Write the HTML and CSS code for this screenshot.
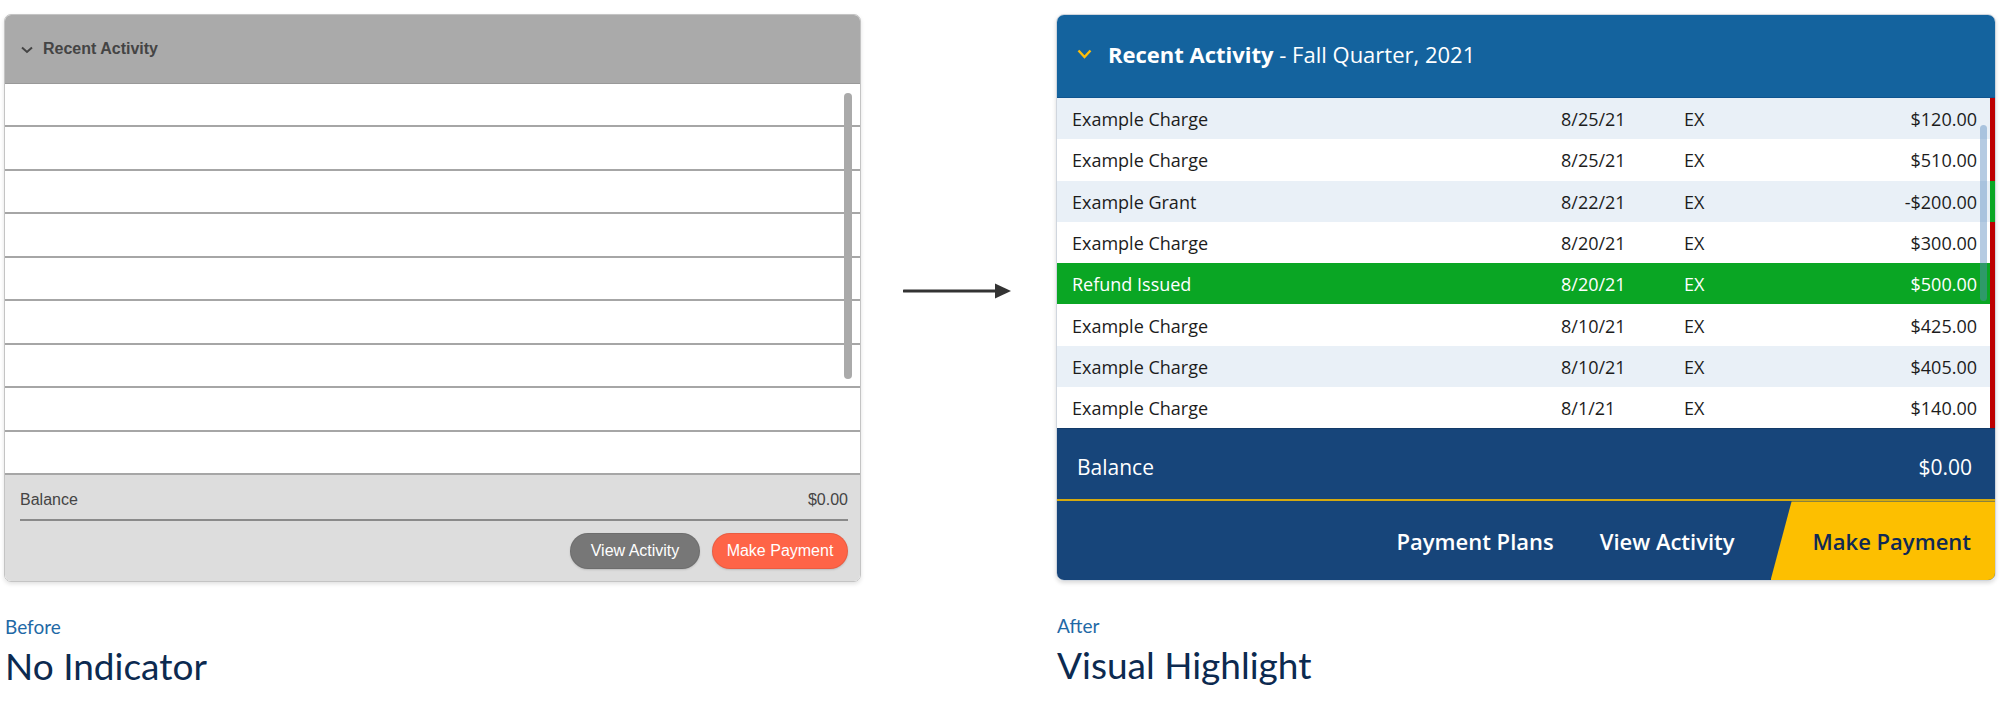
FILE: index.html
```html
<!DOCTYPE html>
<html lang="en">
<head>
  <meta charset="UTF-8" />
  <title>Recent Activity - Before / After</title>
  <link rel="stylesheet" href="styles.css">
</head>
<body>
  <div class="compare">

    <!-- Before -->
    <section class="column column-before">
      <div class="old-card">
        <div class="old-header">
          <svg class="old-chevron" width="12" height="8" viewBox="0 0 12 8"><path d="M1 1.5 L6 6 L11 1.5" fill="none" stroke="#444" stroke-width="2"/></svg>
          <span>Recent Activity</span>
        </div>
        <div class="old-rows">
          <div class="old-row"></div>
          <div class="old-row"></div>
          <div class="old-row"></div>
          <div class="old-row"></div>
          <div class="old-row"></div>
          <div class="old-row"></div>
          <div class="old-row"></div>
          <div class="old-row"></div>
          <div class="old-row"></div>
          <div class="old-scroll"></div>
        </div>
        <div class="old-footer">
          <div class="old-balance">
            <span>Balance</span>
            <span>$0.00</span>
          </div>
          <div class="old-actions">
            <button class="old-btn old-btn-grey">View Activity</button>
            <button class="old-btn old-btn-red">Make Payment</button>
          </div>
        </div>
      </div>
      <div class="caption">
        <p class="caption-kicker">Before</p>
        <h2 class="caption-title">No Indicator</h2>
      </div>
    </section>

    <div class="arrow">
      <svg width="110" height="18" viewBox="0 0 110 18"><path d="M1 9 H92" stroke="#333" stroke-width="3" stroke-linecap="round"/><path d="M92 1.5 L108 9 L92 16.5 Z" fill="#333"/></svg>
    </div>

    <!-- After -->
    <section class="column column-after">
      <div class="new-card">
        <div class="new-header">
          <svg class="new-chevron" width="15" height="10" viewBox="0 0 15 10"><path d="M1.5 1.5 L7.5 8 L13.5 1.5" fill="none" stroke="#fbbd0a" stroke-width="2.4"/></svg>
          <span class="new-title"><b>Recent Activity</b> - Fall Quarter, 2021</span>
        </div>
        <div class="new-rows">
          <div class="new-row shade"><span class="c-desc">Example Charge</span><span class="c-date">8/25/21</span><span class="c-code">EX</span><span class="c-amt">$120.00</span></div>
          <div class="new-row"><span class="c-desc">Example Charge</span><span class="c-date">8/25/21</span><span class="c-code">EX</span><span class="c-amt">$510.00</span></div>
          <div class="new-row shade credit"><span class="c-desc">Example Grant</span><span class="c-date">8/22/21</span><span class="c-code">EX</span><span class="c-amt">-$200.00</span></div>
          <div class="new-row"><span class="c-desc">Example Charge</span><span class="c-date">8/20/21</span><span class="c-code">EX</span><span class="c-amt">$300.00</span></div>
          <div class="new-row refund"><span class="c-desc">Refund Issued</span><span class="c-date">8/20/21</span><span class="c-code">EX</span><span class="c-amt">$500.00</span></div>
          <div class="new-row"><span class="c-desc">Example Charge</span><span class="c-date">8/10/21</span><span class="c-code">EX</span><span class="c-amt">$425.00</span></div>
          <div class="new-row shade"><span class="c-desc">Example Charge</span><span class="c-date">8/10/21</span><span class="c-code">EX</span><span class="c-amt">$405.00</span></div>
          <div class="new-row"><span class="c-desc">Example Charge</span><span class="c-date">8/1/21</span><span class="c-code">EX</span><span class="c-amt">$140.00</span></div>
          <div class="new-scroll"></div>
        </div>
        <div class="new-balance">
          <span>Balance</span>
          <span>$0.00</span>
        </div>
        <div class="new-actions">
          <a class="new-link link-plans">Payment Plans</a>
          <a class="new-link">View Activity</a>
          <a class="new-pay">Make Payment</a>
        </div>
      </div>
      <div class="caption">
        <p class="caption-kicker">After</p>
        <h2 class="caption-title">Visual Highlight</h2>
      </div>
    </section>

  </div>
</body>
</html>
```

FILE: styles.css
```css
body {
  margin: 0;
  background: #fff;
  font-family: 'Liberation Sans', Arial, sans-serif;
}

.compare {
  display: flex;
  align-items: flex-start;
  padding: 14px 0 0 4px;
}

.column-before {
  width: 857px;
}

.column-after {
  width: 940px;
}

.arrow {
  width: 195px;
  padding-top: 268px;
  padding-left: 42px;
  box-sizing: border-box;
}

.arrow svg {
  display: block;
}

/* ---------- before card ---------- */

.old-card {
  border: 1px solid #c4c4c4;
  border-radius: 7px;
  overflow: hidden;
  box-shadow: 0 2px 4px rgba(0, 0, 0, 0.12);
}

.old-header {
  height: 68px;
  background: #aaaaaa;
  display: flex;
  align-items: center;
  gap: 10px;
  padding-left: 16px;
  color: #444;
  font-weight: bold;
  font-size: 16px;
  border-bottom: 1px solid #999;
}

.old-chevron {
  margin-top: 1px;
}

.old-rows {
  position: relative;
  height: 389px;
  display: flex;
  flex-direction: column;
  background: #fff;
}

.old-row {
  flex: 1;
}

.old-row + .old-row {
  border-top: 2px solid #a6a6a6;
}

.old-scroll {
  position: absolute;
  top: 9px;
  right: 8px;
  width: 8px;
  height: 286px;
  border-radius: 4px;
  background: #aaa;
}

.old-footer {
  background: #dddddd;
  border-top: 2px solid #a6a6a6;
  padding: 0 12px 12px 15px;
}

.old-balance {
  display: flex;
  justify-content: space-between;
  align-items: center;
  height: 46px;
  padding-top: 5px;
  box-sizing: border-box;
  font-size: 16px;
  color: #444;
  border-bottom: 2px solid #8a8a8a;
}

.old-actions {
  display: flex;
  justify-content: flex-end;
  gap: 12px;
  margin-top: 12px;
}

.old-btn {
  height: 36px;
  border-radius: 18px;
  border: 1px solid rgba(0, 0, 0, 0.08);
  color: #fff;
  font-family: 'Liberation Sans', Arial, sans-serif;
  font-size: 16px;
  box-shadow: 0 1px 2px rgba(0, 0, 0, 0.15);
}

.old-btn-grey {
  width: 130px;
  background: #777777;
}

.old-btn-red {
  width: 136px;
  background: #fe6447;
}

/* ---------- after card ---------- */

.new-card {
  border-radius: 8px;
  overflow: hidden;
  border: 1px solid #d0d6de;
  box-shadow: 0 2px 4px rgba(0, 0, 0, 0.15);
  font-family: 'Open Sans', 'Noto Sans', sans-serif;
}

.new-header {
  height: 83px;
  background: #14639e;
  display: flex;
  align-items: center;
  gap: 16px;
  padding: 0 0 5px 20px;
  box-sizing: border-box;
  color: #fff;
  font-size: 22px;
  border-bottom: 1px solid #0f5590;
}

.new-title b {
  font-weight: 700;
}

.new-rows {
  position: relative;
}

.new-row {
  height: 41.3px;
  display: flex;
  align-items: center;
  padding: 1px 13px 0 15px;
  box-sizing: border-box;
  font-size: 18px;
  color: #1c1c1c;
  background: #fff;
  border-right: 5px solid #bd0000;
}

.new-row.shade {
  background: #e9f0f7;
}

.new-row.credit {
  border-right-color: #0aa624;
}

.new-row.refund {
  background: #0aa624;
  color: #fff;
}

.c-desc {
  width: 489px;
}

.c-date {
  width: 123px;
}

.c-code {
  flex: 1;
}

.new-scroll {
  position: absolute;
  top: 27px;
  right: 8px;
  width: 7px;
  height: 176px;
  border-radius: 4px;
  background: rgba(90, 140, 190, 0.45);
}

.new-balance {
  height: 73px;
  display: flex;
  justify-content: space-between;
  align-items: center;
  padding: 6px 23px 0 20px;
  box-sizing: border-box;
  background: #17457a;
  color: #fff;
  font-size: 21px;
  border-top: 1px solid #123a68;
  border-bottom: 2px solid #d4a90f;
}

.new-actions {
  height: 79px;
  display: flex;
  justify-content: flex-end;
  align-items: stretch;
  gap: 36px;
  background: #17457a;
  font-size: 22px;
  font-weight: 600;
}

.new-link {
  display: flex;
  align-items: center;
  color: #fff;
}

.link-plans {
  margin-right: 10px;
}

.new-pay {
  display: flex;
  align-items: center;
  padding: 0 24px 0 42px;
  background: #fdbf00;
  color: #0f2a55;
  clip-path: polygon(21px 0, 100% 0, 100% 100%, 0 100%);
}

/* ---------- captions ---------- */

.caption {
  padding-left: 1px;
  font-family: Lato, sans-serif;
}

.caption-kicker {
  margin: 33px 0 0;
  font-size: 19px;
  color: #1f69a6;
}

.caption-title {
  margin: 5px 0 0;
  font-size: 37px;
  font-weight: 400;
  color: #0c2a50;
}
```
